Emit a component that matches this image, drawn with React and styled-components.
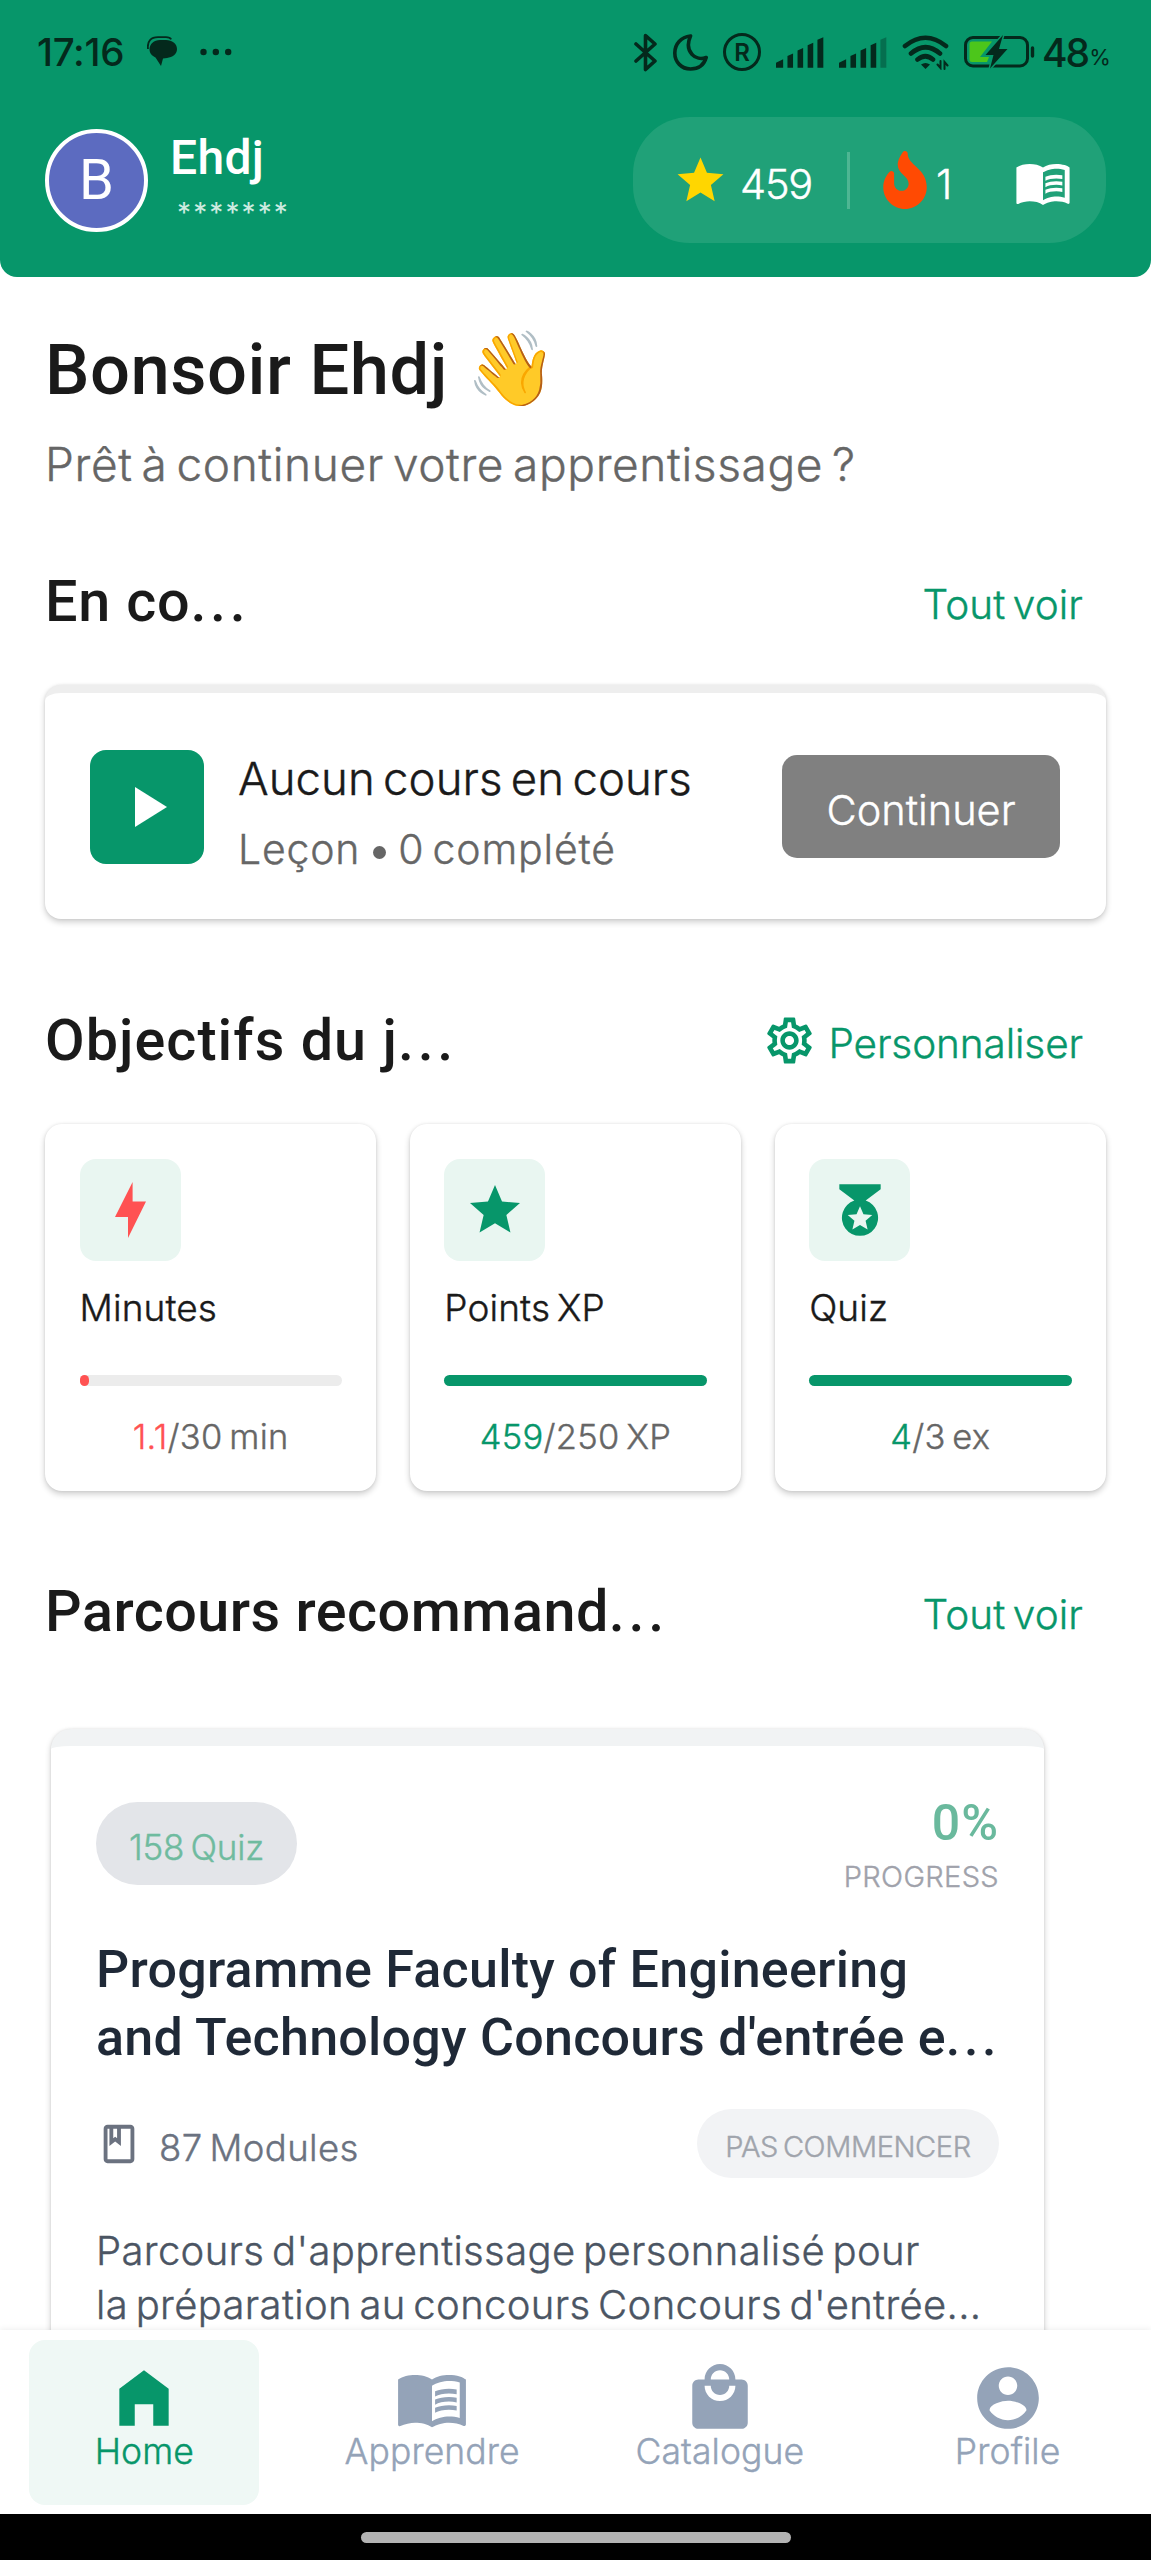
import React from 'react';
import styled, { createGlobalStyle, css } from 'styled-components';
import { MdStar, MdMenuBook, MdOutlineSettings, MdOutlineBook, MdLocalMall } from 'react-icons/md';
import { FaFire } from 'react-icons/fa';

const green = '#07966a';
const ink = '#04291c';

const GlobalStyle = createGlobalStyle`
  * {
    box-sizing: border-box;
  }
  body {
    margin: 0;
    background: #fff;
  }
  h1, h2, h3, p {
    margin: 0;
  }
  svg {
    display: block;
    flex-shrink: 0;
  }
`;

const light = css`
  font-family: Inter, sans-serif;
  font-weight: 300;
  -webkit-text-stroke: 0.4px currentColor;
  word-spacing: -0.1em;
  white-space: nowrap;
`;

const heavy = css`
  font-family: Roboto, sans-serif;
  font-weight: 500;
  white-space: nowrap;
`;

const Screen = styled.div`
  display: flex;
  flex-direction: column;
  width: 1151px;
  height: 2560px;
  overflow: hidden;
  background: #fff;
`;

const Header = styled.header`
  height: 277px;
  flex-shrink: 0;
  background: ${green};
  border-radius: 0 0 17px 17px;
`;

const StatusBar = styled.div`
  display: flex;
  justify-content: space-between;
  height: 104px;
  padding: 0 43px 0 37px;
  color: ${ink};
`;

const StatusSide = styled.div`
  display: flex;
  align-items: center;
  gap: ${(p) => p.$gap}px;
`;

const Clock = styled.span`
  font: 500 38.5px Inter, sans-serif;
  line-height: 104px;
  letter-spacing: -0.3px;
`;

const Registered = styled.div`
  display: flex;
  align-items: center;
  justify-content: center;
  width: 38px;
  height: 38px;
  border: 3.5px solid ${ink};
  border-radius: 50%;
  font: 600 24px Inter, sans-serif;
`;

const Battery = styled.div`
  display: flex;
  align-items: center;
  width: 66px;
  margin-left: -8px;
  font: 500 39px Inter, sans-serif;
  letter-spacing: -2px;

  small {
    font-size: 22px;
    letter-spacing: 0;
    margin: 10px 0 0 1px;
    font-weight: 400;
  }
`;

const ProfileRow = styled.div`
  display: flex;
  align-items: center;
  height: 152px;
  padding: 0 45px;
`;

const Avatar = styled.div`
  display: flex;
  align-items: center;
  justify-content: center;
  width: 103px;
  height: 103px;
  border: 4px solid #fff;
  border-radius: 50%;
  background: #5c6bc0;
  color: #fff;
  font: 400 56px Roboto, sans-serif;
`;

const Who = styled.div`
  flex: 1;
  margin: 5px 0 0 22px;
`;

const Name = styled.div`
  ${heavy}
  font-size: 48px;
  line-height: 60px;
  letter-spacing: 0.3px;
  color: #fff;
`;

const Masked = styled.div`
  padding-left: 7px;
  font: 400 28px Inter, sans-serif;
  line-height: 50px;
  letter-spacing: 2.1px;
  color: #cdebe0;
`;

const Stats = styled.div`
  display: flex;
  align-items: center;
  width: 473px;
  height: 126px;
  padding-left: 40px;
  border-radius: 57px;
  background: #20a178;
  color: #fff;
`;

const StatCount = styled.span`
  ${light}
  width: ${(p) => p.$width}px;
  margin-left: ${(p) => p.$left}px;
  padding-top: 7px;
  font-size: 41.5px;
  letter-spacing: -1.2px;
`;

const StatDivider = styled.div`
  width: 3px;
  height: 57px;
  margin: 0 26px 0 34px;
  background: #4eb693;
`;

const BookIcon = styled(MdMenuBook)`
  margin: 4px 0 0 58px;
  font-size: 58px;
`;

const Main = styled.main`
  flex: 1;
  min-height: 0;
  overflow: hidden;
  padding: 53px 45px 0;
`;

const Greeting = styled.h1`
  ${heavy}
  height: 80px;
  font-size: 70.5px;
  line-height: 80px;
  letter-spacing: 0.5px;
  color: #1a1a1a;
`;

const Wave = styled.span`
  font-family: 'Noto Color Emoji', sans-serif;
  font-size: 73px;
  line-height: 1;
`;

const Subtitle = styled.p`
  ${light}
  margin-top: 24px;
  font-size: 46px;
  line-height: 60px;
  letter-spacing: 0.63px;
  color: #666;
`;

const SectionHead = styled.div`
  display: flex;
  justify-content: space-between;
  align-items: center;
  height: 80px;
  margin-top: ${(p) => p.$top}px;
  padding-right: 23px;
`;

const SectionTitle = styled.h2`
  ${heavy}
  font-size: 57.5px;
  line-height: 80px;
  letter-spacing: ${(p) => p.$spacing}px;
  color: #1a1a1a;
`;

const Ellipsis = styled.span`
  letter-spacing: 3.7px;
`;

const SectionLink = styled.a`
  ${light}
  display: flex;
  align-items: center;
  gap: 11px;
  padding-top: 5px;
  font-size: 40.5px;
  letter-spacing: ${(p) => p.$spacing || 0}px;
  color: ${green};

  svg {
    margin-top: -6px;
    font-size: 55px;
  }
`;

const cardShadow = css`
  background: #fff;
  box-shadow: 0 3px 6px rgba(0, 0, 0, 0.2), 0 0 3px rgba(0, 0, 0, 0.08);
`;

const CourseCard = styled.div`
  ${cardShadow}
  display: flex;
  align-items: center;
  height: 234px;
  margin-top: 43px;
  padding: 0 46px 0 45px;
  border-top: 8px solid #eee;
  border-radius: 16px;
`;

const PlayBox = styled.div`
  display: flex;
  align-items: center;
  width: 114px;
  height: 114px;
  margin-top: 2px;
  padding-left: 45px;
  border-radius: 16px;
  background: ${green};
`;

const CourseText = styled.div`
  flex: 1;
  margin-left: 34px;
  padding-top: 15px;
`;

const CourseTitle = styled.div`
  ${light}
  font-size: 45.5px;
  line-height: 71px;
  letter-spacing: 0.07px;
  color: #1a1a1a;
`;

const CourseMeta = styled.div`
  ${light}
  display: flex;
  align-items: center;
  font-size: 41px;
  line-height: 71px;
  letter-spacing: 0.8px;
  color: #666;
`;

const Dot = styled.i`
  width: 13px;
  height: 13px;
  margin: 7px 12px 0 13px;
  border-radius: 50%;
  background: #666;
`;

const ContinueButton = styled.button`
  ${light}
  width: 278px;
  height: 103px;
  padding: 7px 0 0;
  border: 0;
  border-radius: 15px;
  background: #808080;
  color: #fff;
  font-size: 41.5px;
`;

const Goals = styled.div`
  display: grid;
  grid-template-columns: repeat(3, 1fr);
  gap: 33.5px;
  margin-top: 43px;
`;

const GoalCard = styled.div`
  ${cardShadow}
  height: 367px;
  padding: 35px 34.5px 0;
  border-radius: 17px;
`;

const GoalIcon = styled.div`
  display: flex;
  align-items: center;
  justify-content: center;
  width: 101px;
  height: 102px;
  border-radius: 16px;
  background: #e9f6f1;
  color: ${green};
`;

const GoalName = styled.div`
  ${light}
  margin-top: 17px;
  font-size: 37px;
  line-height: 60px;
  letter-spacing: 0.1px;
  color: #1a1a1a;
`;

const Track = styled.div`
  height: 11px;
  margin-top: 37px;
  border-radius: 6px;
  background: #ececec;
`;

const Fill = styled.div`
  height: 11px;
  border-radius: 6px;
  background: ${(p) => p.$color};
`;

const GoalValue = styled.div`
  ${light}
  margin-top: 26px;
  font-size: 34.5px;
  line-height: 50px;
  letter-spacing: 0.3px;
  text-align: center;
  color: #666;

  span {
    color: ${(p) => p.$color};
  }
`;

const PathCard = styled.article`
  ${cardShadow}
  width: 993px;
  height: 700px;
  margin: 77px 0 0 6px;
  padding: 56px 45px 0;
  border-top: 17px solid #f1f3f4;
  border-radius: 20px;
`;

const PathTop = styled.div`
  display: flex;
  justify-content: space-between;
  height: 83px;
`;

const QuizPill = styled.div`
  ${light}
  width: 201px;
  height: 83px;
  padding-top: 4px;
  border-radius: 42px;
  background: #e3e5e9;
  color: #6fbb9f;
  font-size: 35px;
  line-height: 83px;
  letter-spacing: -0.2px;
  text-align: center;
`;

const Progress = styled.div`
  margin-top: -6px;
  text-align: right;
`;

const Percent = styled.div`
  ${heavy}
  font-size: 50px;
  line-height: 54px;
  letter-spacing: 1px;
  color: #6ab99d;
`;

const ProgressLabel = styled.div`
  ${light}
  font-size: 29px;
  line-height: 53px;
  letter-spacing: 0.35px;
  color: #a0a2ab;
`;

const PathTitle = styled.h3`
  ${heavy}
  margin-top: 51px;
  font-size: 52px;
  line-height: 67.5px;
  letter-spacing: 0.25px;
  color: #1f2937;
`;

const PathMeta = styled.div`
  display: flex;
  align-items: center;
  margin-top: 38px;
  color: #6b7280;

  svg {
    font-size: 46px;
  }
`;

const ModuleCount = styled.div`
  ${light}
  flex: 1;
  padding-top: 9px;
  margin-left: 17px;
  font-size: 36.5px;
  letter-spacing: 0.4px;
`;

const StatusPill = styled.div`
  ${light}
  width: 302px;
  height: 69px;
  padding-top: 3px;
  border-radius: 35px;
  background: #f2f3f5;
  color: #a0a4ac;
  font-size: 29px;
  line-height: 69px;
  letter-spacing: -0.4px;
  text-align: center;
`;

const Description = styled.p`
  ${light}
  margin-top: 46px;
  font-size: 40px;
  line-height: 54px;
  letter-spacing: 0.36px;
  color: #4b5563;
`;

const TabBar = styled.nav`
  position: relative;
  z-index: 1;
  display: grid;
  grid-template-columns: repeat(4, 1fr);
  justify-items: center;
  align-items: center;
  height: 184px;
  flex-shrink: 0;
  background: #fff;
  box-shadow: 0 -1px 6px rgba(0, 0, 0, 0.07);
`;

const Tab = styled.a`
  ${light}
  display: flex;
  flex-direction: column;
  align-items: center;
  width: 230px;
  height: 165px;
  padding: 21px 0 0 1px;
  border-radius: 16px;
  background: ${(p) => (p.$active ? '#eff8f5' : 'transparent')};
  color: ${(p) => (p.$active ? green : '#94a3b8')};
  font-size: 35.5px;
  line-height: 40px;
  letter-spacing: 0.1px;

  svg {
    width: 74px;
    height: 74px;
    margin-bottom: -3px;
  }
`;

const GestureBar = styled.div`
  display: flex;
  justify-content: center;
  height: 46px;
  padding-top: 18px;
  flex-shrink: 0;
  background: #000;

  i {
    width: 430px;
    height: 11px;
    border-radius: 6px;
    background: #b3b3b3;
  }
`;

const ChatIcon = () => (
  <svg width="30" height="32" viewBox="0 0 30 32" fill={ink}>
    <path d="M13 4h6c6 0 11 3.500 11 9s-4.500 8-10 9l-4 .5-2 7.500-5.500-8.500C5 20 2.500 17 2.500 13.500 2.500 8 7 4 13 4z" />
    <path d="M1 13C0 5 4 1.200 11 1.200h8c3 0 4.500 1 5.200 2.200" fill="none" stroke={ink} strokeWidth="1.800" />
  </svg>
);

const DotsIcon = () => (
  <svg width="32" height="8" viewBox="0 0 32 8" fill={ink}>
    <circle cx="3.500" cy="4" r="3.200" />
    <circle cx="15.800" cy="4" r="3.200" />
    <circle cx="28.200" cy="4" r="3.200" />
  </svg>
);

const BluetoothIcon = () => (
  <svg width="24" height="39" viewBox="0 0 24 39" fill="none" stroke={ink} strokeWidth="3.600" strokeLinejoin="round" strokeLinecap="round">
    <path d="M2 11l19 17-9.500 8.500V2.500L21 11 2 28" />
  </svg>
);

const MoonIcon = () => (
  <svg width="35" height="37" viewBox="0 0 35 37" fill="none" stroke={ink} strokeWidth="3.600" strokeLinejoin="round">
    <path d="M17.500 2C8 3 1.800 10 1.800 19c0 9 6.700 16 15.700 16 7.500 0 13.500-4 15.700-11.500C23 27.500 10.500 18 17.500 2z" />
  </svg>
);

const SignalIcon = ({ weak }) => (
  <svg width="48" height="31" viewBox="0 0 49 31" fill={ink}>
    <path d="M0 31v-5l7.300-3.500V31z" />
    <path d="M11.700 31V19l5.700-2.500V31z" />
    <path d="M22 31V13.500l5.700-2.500V31z" />
    <path d="M32.300 31V8l5.700-2.500V31z" />
    <path d="M42.300 31V2.500L48.300 0v31z" opacity={weak ? 0.35 : 1} />
  </svg>
);

const WifiIcon = () => (
  <svg width="47" height="35" viewBox="0 0 47 35" fill="none" stroke={ink} strokeWidth="4.600" strokeLinecap="round">
    <path d="M3 11Q23.500-5.500 44 11M9 18.500Q23.500 6 38 18.500M15.500 24.500Q23.500 18 31 24.500" />
    <path d="M19 29.500q4.500-3 9 0L23.500 34z" fill={ink} stroke="none" />
    <path d="M38.500 26v7l-3-3.500M42.500 34v-7l3 3.500" strokeWidth="2" />
  </svg>
);

const BatteryIcon = () => (
  <svg width="71" height="34" viewBox="0 -1 71 34">
    <rect x="1.500" y="1.500" width="62" height="28.500" rx="7.500" fill="none" stroke={ink} strokeWidth="3" />
    <path d="M68.500 12v8" stroke={ink} strokeWidth="3.400" strokeLinecap="round" />
    <path d="M8 5.500h20L16 21h9l-2 5H8a2.500 2.500 0 01-2.500-2.500V8A2.500 2.500 0 018 5.500z" fill="#4cc61b" />
    <path d="M39-1L21.500 19h8L26 32.500 43.500 13H35z" fill={ink} stroke={green} strokeWidth="3" paintOrder="stroke" />
  </svg>
);

const BoltIcon = () => (
  <svg width="31" height="56" viewBox="0 0 31 56" fill="#ff5252">
    <path d="M17.600 0v19.500H31L13 56V35H0z" />
  </svg>
);

const MedalIcon = () => (
  <svg width="62" height="62" viewBox="0 0 24 24" fill="currentColor">
    <path
      fillRule="evenodd"
      d="M20 2H4v2l5.800 4.360a7 7 0 104.400 0L20 4V2zm-5.060 17.500L12 17.780 9.060 19.500l.780-3.340-2.590-2.240 3.410-.290L12 10.500l1.340 3.130 3.410.290-2.590 2.240.780 3.340z"
    />
  </svg>
);

const HomeIcon = () => (
  <svg viewBox="0 0 24 24" fill="currentColor">
    <path d="M12 3l8 6v12h-5v-7H9v7H4V9z" />
  </svg>
);

const AccountIcon = () => (
  <svg viewBox="0 0 24 24" fill="currentColor">
    <path d="M12 2C6.480 2 2 6.480 2 12s4.480 10 10 10 10-4.480 10-10S17.520 2 12 2zm0 3c1.660 0 3 1.340 3 3s-1.340 3-3 3-3-1.340-3-3 1.340-3 3-3zm0 14.200c-2.500 0-4.710-1.280-6-3.220.030-1.990 4-3.080 6-3.080 1.990 0 5.970 1.090 6 3.080-1.290 1.940-3.500 3.220-6 3.220z" />
  </svg>
);

const goals = [
  { name: 'Minutes', value: '1.1', target: '/30 min', percent: 3.7, color: '#ff5252', icon: <BoltIcon /> },
  { name: 'Points XP', value: '459', target: '/250 XP', percent: 100, color: green, icon: <MdStar size={60} /> },
  { name: 'Quiz', value: '4', target: '/3 ex', percent: 100, color: green, icon: <MedalIcon /> },
];

const tabs = [
  { label: 'Home', icon: <HomeIcon />, active: true },
  { label: 'Apprendre', icon: <MdMenuBook /> },
  { label: 'Catalogue', icon: <MdLocalMall /> },
  { label: 'Profile', icon: <AccountIcon /> },
];

const App = () => {
  return (
    <Screen>
      <GlobalStyle />
      <Header>
        <StatusBar>
          <StatusSide $gap={23}>
            <Clock>17:16</Clock>
            <ChatIcon />
            <DotsIcon />
          </StatusSide>
          <StatusSide $gap={15}>
            <BluetoothIcon />
            <MoonIcon />
            <Registered>R</Registered>
            <SignalIcon />
            <SignalIcon weak />
            <WifiIcon />
            <BatteryIcon />
            <Battery>48<small>%</small></Battery>
          </StatusSide>
        </StatusBar>
        <ProfileRow>
          <Avatar>B</Avatar>
          <Who>
            <Name>Ehdj</Name>
            <Masked>*******</Masked>
          </Who>
          <Stats>
            <MdStar size={55} color="#ffd600" />
            <StatCount $width={73} $left={12}>459</StatCount>
            <StatDivider />
            <FaFire size={58} color="#ff4a03" />
            <StatCount $width={20} $left={2}>1</StatCount>
            <BookIcon />
          </Stats>
        </ProfileRow>
      </Header>

      <Main>
        <Greeting>Bonsoir Ehdj <Wave>👋</Wave></Greeting>
        <Subtitle>Prêt à continuer votre apprentissage ?</Subtitle>

        <SectionHead $top={68}>
          <SectionTitle $spacing={0.8}>En co<Ellipsis>...</Ellipsis></SectionTitle>
          <SectionLink $spacing={0.1}>Tout voir</SectionLink>
        </SectionHead>
        <CourseCard>
          <PlayBox>
            <svg width="32" height="40" viewBox="0 0 32 40" fill="#fff">
              <path d="M0 0l32 20L0 40z" />
            </svg>
          </PlayBox>
          <CourseText>
            <CourseTitle>Aucun cours en cours</CourseTitle>
            <CourseMeta>Leçon<Dot />0 complété</CourseMeta>
          </CourseText>
          <ContinueButton>Continuer</ContinueButton>
        </CourseCard>

        <SectionHead $top={82}>
          <SectionTitle $spacing={1.05}>Objectifs du j<Ellipsis>...</Ellipsis></SectionTitle>
          <SectionLink $spacing={-0.1}><MdOutlineSettings />Personnaliser</SectionLink>
        </SectionHead>
        <Goals>
          {goals.map((goal) => (
            <GoalCard key={goal.name}>
              <GoalIcon>{goal.icon}</GoalIcon>
              <GoalName>{goal.name}</GoalName>
              <Track>
                <Fill $color={goal.color} style={{ width: `${goal.percent}%` }} />
              </Track>
              <GoalValue $color={goal.color}><span>{goal.value}</span>{goal.target}</GoalValue>
            </GoalCard>
          ))}
        </Goals>

        <SectionHead $top={81}>
          <SectionTitle $spacing={0.5}>Parcours recommand<Ellipsis>...</Ellipsis></SectionTitle>
          <SectionLink $spacing={0.1}>Tout voir</SectionLink>
        </SectionHead>
        <PathCard>
          <PathTop>
            <QuizPill>158 Quiz</QuizPill>
            <Progress>
              <Percent>0%</Percent>
              <ProgressLabel>PROGRESS</ProgressLabel>
            </Progress>
          </PathTop>
          <PathTitle>Programme Faculty of Engineering<br />and Technology Concours d'entrée e<Ellipsis>...</Ellipsis></PathTitle>
          <PathMeta>
            <MdOutlineBook />
            <ModuleCount>87 Modules</ModuleCount>
            <StatusPill>PAS COMMENCER</StatusPill>
          </PathMeta>
          <Description>Parcours d'apprentissage personnalisé pour<br />la préparation au concours Concours d'entrée...</Description>
        </PathCard>
      </Main>

      <TabBar>
        {tabs.map((tab) => (
          <Tab key={tab.label} $active={tab.active}>
            {tab.icon}
            {tab.label}
          </Tab>
        ))}
      </TabBar>
      <GestureBar><i /></GestureBar>
    </Screen>
  );
};

export default App;
